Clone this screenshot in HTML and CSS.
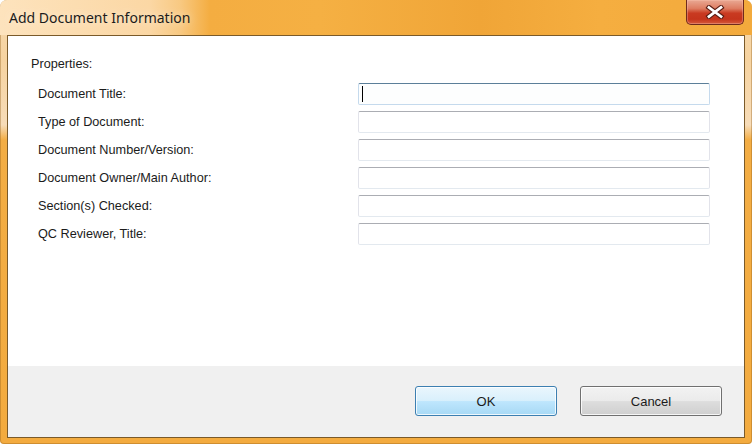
FILE: index.html
```html
<!DOCTYPE html>
<html lang="en">
<head>
<meta charset="utf-8">
<title>Add Document Information</title>
<link rel="stylesheet" href="styles.css">
</head>
<body>
<div class="window">
  <div class="titlebar">
    <span class="title">Add Document Information</span>
    <div class="close" aria-label="Close">
      <svg width="20" height="14" viewBox="0 0 20 14">
        <path d="M4 2.5 L16 11.5 M16 2.5 L4 11.5" stroke="#5a1e14" stroke-width="5" stroke-linecap="square" fill="none"/>
        <path d="M4 2.5 L16 11.5 M16 2.5 L4 11.5" stroke="#ffffff" stroke-width="2.8" stroke-linecap="square" fill="none"/>
      </svg>
    </div>
  </div>
  <div class="client">
    <div class="main">
      <div class="group-label">Properties:</div>
      <div class="form">
        <label class="label">Document Title:</label>
        <div class="field focused"><span class="caret"></span></div>
        <label class="label">Type of Document:</label>
        <div class="field"></div>
        <label class="label">Document Number/Version:</label>
        <div class="field"></div>
        <label class="label">Document Owner/Main Author:</label>
        <div class="field"></div>
        <label class="label">Section(s) Checked:</label>
        <div class="field"></div>
        <label class="label">QC Reviewer, Title:</label>
        <div class="field"></div>
      </div>
    </div>
    <div class="footer">
      <button class="btn btn-default">OK</button>
      <button class="btn">Cancel</button>
    </div>
  </div>
</div>
</body>
</html>
```

FILE: styles.css
```css
* { box-sizing: border-box; }
html, body { margin: 0; padding: 0; background: #ffffff; }
body { width: 752px; height: 444px; overflow: hidden; }

.window {
  width: 752px;
  height: 444px;
  display: flex;
  flex-direction: column;
  border-radius: 7px 7px 4px 4px;
  background: linear-gradient(180deg, #f6d9ae 0px, #f6d3a0 60px, #f7dcb8 125px, #f3ad44 140px, #f3ab3f 100%);
  box-shadow: inset 0 0 0 1px rgba(140, 90, 20, 0.35);
  font-family: "Liberation Sans", Arial, sans-serif;
}

.titlebar {
  height: 35px;
  flex: none;
  display: flex;
  justify-content: space-between;
  align-items: flex-start;
  padding-left: 9px;
  padding-right: 8px;
  border-radius: 7px 7px 0 0;
  background: linear-gradient(90deg, #fde3bd 0px, #fbd7a4 150px, #f8c982 180px, #f4ad41 210px, #f5b043 320px, #f0a537 480px, #f5ae40 600px, #f3aa3c 100%);
}

.title {
  font-family: "Noto Sans", "Open Sans", sans-serif;
  font-size: 14px;
  color: #1c1c1c;
  line-height: 20px;
  margin-top: 8px;
  text-shadow: 0 0 8px rgba(255, 246, 230, 0.9);
}

.close {
  width: 58px;
  height: 25px;
  display: flex;
  align-items: center;
  justify-content: center;
  border: 1px solid #6e2a1c;
  border-top: none;
  border-radius: 0 0 5px 5px;
  background: linear-gradient(180deg, #e9a893 0%, #de7d62 35%, #c93a21 55%, #c5341c 80%, #d55a3c 100%);
  box-shadow: inset 0 0 0 1px rgba(255, 200, 180, 0.35);
}

.close svg { display: block; }

.client {
  flex: 1;
  margin: 0 7px 6px 7px;
  border: 1px solid #7a5a2a;
  background: #ffffff;
  display: flex;
  flex-direction: column;
}

.main {
  height: 330px;
  padding: 21px 0 0 23px;
  background: #ffffff;
}

.group-label {
  font-size: 12.7px;
  line-height: 15px;
  color: #1b1b1b;
}

.form {
  margin-top: 11px;
  padding-left: 7px;
  display: grid;
  grid-template-columns: 320px 352px;
  grid-auto-rows: 22px;
  row-gap: 6px;
  align-items: center;
}

.label {
  font-size: 12.7px;
  line-height: 15px;
  color: #1b1b1b;
}

.field {
  height: 22px;
  border: 1px solid #e2e3ea;
  border-top-color: #abadb3;
  border-bottom-color: #e3e9ef;
  border-radius: 2px;
  background: #ffffff;
  position: relative;
}

.field.focused {
  border-color: #c5daed;
  border-top-color: #5b7f99;
  background: #fdfefe;
}

.caret {
  position: absolute;
  left: 3px;
  top: 2px;
  width: 1px;
  height: 16px;
  background: #000000;
}

.footer {
  flex: 1;
  background: #f0f0f0;
  display: flex;
  justify-content: flex-end;
  align-items: flex-start;
  gap: 23px;
  padding: 20px 22px 0 0;
}

.btn {
  width: 142px;
  height: 30px;
  margin: 0;
  padding: 0;
  font-family: "Liberation Sans", Arial, sans-serif;
  font-size: 13px;
  color: #1b1b1b;
  border: 1px solid #707070;
  border-radius: 3px;
  background: linear-gradient(180deg, #f2f2f2 0%, #ebebeb 48%, #dddddd 52%, #cfcfcf 100%);
  box-shadow: inset 0 0 0 1px rgba(255, 255, 255, 0.8);
}

.btn-default {
  border-color: #3c7fb1;
  background: linear-gradient(180deg, #eaf6fd 0%, #d9f0fc 48%, #bee6fd 52%, #a7d9f5 100%);
}
```
